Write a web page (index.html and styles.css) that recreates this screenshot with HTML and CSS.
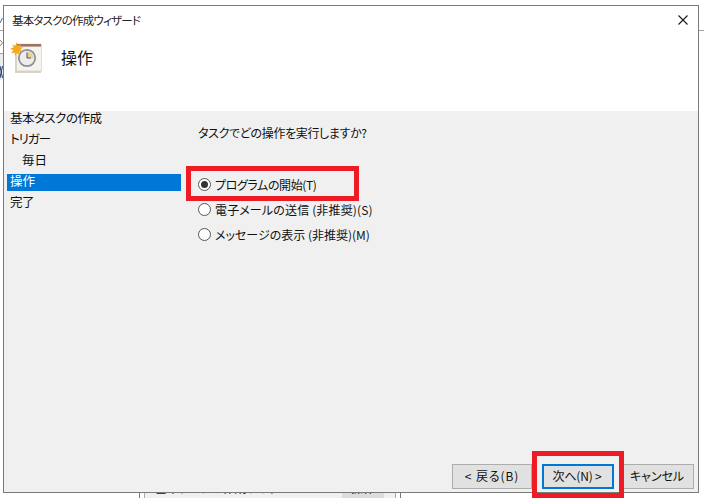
FILE: index.html
```html
<!DOCTYPE html>
<html lang="ja">
<head>
<meta charset="utf-8">
<title>基本タスクの作成ウィザード</title>
<link rel="stylesheet" href="styles.css">
</head>
<body>
<div class="behind-right"></div>
<svg class="behind-left" width="3" height="90" viewBox="0 0 3 90">
  <path d="M0 23L2.5 18" stroke="#3a6ea5" fill="none"/>
  <rect x="0" y="30" width="3" height="1" fill="#a0a0a0"/>
  <path d="M0 40L2.5 43L0 46" stroke="#888" fill="none"/>
  <rect x="0" y="53" width="3" height="1" fill="#a0a0a0"/>
  <rect x="0" y="54" width="3" height="26" fill="#ececec"/>
  <path d="M0 66L2.5 78M2.5 66L0 78" stroke="#1c3f78" fill="none"/>
</svg>
<div class="behind-bottom">
  <div class="bb-inner"><span class="bb-text">基本タスクの作成ウィザード</span><span class="bb-btn">操作</span></div>
</div>
<div class="window">
  <div class="titlebar">
    <span class="title">基本タスクの作成ウィザード</span>
    <svg class="close" width="12" height="12" viewBox="0 0 12 12"><path d="M1.5 1.5L10.5 10.5M10.5 1.5L1.5 10.5" stroke="#1a1a1a" stroke-width="1.1" fill="none"/></svg>
  </div>
  <div class="header">
    <svg class="hicon" width="34" height="34" viewBox="0 0 34 34">
      <rect x="5" y="3" width="26" height="28" fill="#d8d4ca"/>
      <rect x="6.5" y="2" width="25" height="27" fill="#f6f3ec" stroke="#cfcabd" stroke-width="0.6"/>
      <rect x="6" y="2" width="25" height="2.6" fill="#9c7560"/>
      <circle cx="17" cy="16" r="8.2" fill="#ececec" stroke="#8a8f98" stroke-width="1.8"/>
      <path d="M17 9.6A6.4 6.4 0 0 1 23.4 16H17Z" fill="#f0cf95"/>
      <path d="M17 10.5V16H21" stroke="#555" stroke-width="1" fill="none"/>
      <path d="M6.5 0L7.7 4L11 1.8L9.8 5.3L13.5 5.5L10.3 7.5L13 10L9.3 9.8L9.7 13.5L7 11L5 14L4.6 10.4L1 11.4L3.2 8.3L0 6.5L3.7 5.6L2.2 2.2L5.4 4Z" fill="#f7a81b"/>
    </svg>
    <span class="htitle">操作</span>
  </div>
  <div class="body">
    <nav class="steps">
      <div class="step">基本タスクの作成</div>
      <div class="step tight">トリガー</div>
      <div class="step sub">毎日</div>
      <div class="step active">操作</div>
      <div class="step">完了</div>
    </nav>
    <main class="content">
      <p class="question">タスクでどの操作を実行しますか?</p>
      <div class="options">
        <div class="option first"><span class="radio on"></span>プログラムの開始(T)</div>
        <div class="option second"><span class="radio"></span>電子メールの送信 (非推奨)(S)</div>
        <div class="option"><span class="radio"></span>メッセージの表示 (非推奨)(M)</div>
      </div>
    </main>
  </div>
  <div class="footer">
    <button class="btn back">&lt; 戻る(B)</button>
    <button class="btn primary">次へ(N) &gt;</button>
    <button class="btn cancel">キャンセル</button>
  </div>
  <div class="mark mark-radio"></div>
  <div class="mark mark-next"></div>
</div>
</body>
</html>
```
FILE: styles.css
```css
* { box-sizing: border-box; }
html, body { margin: 0; padding: 0; }
body {
  width: 704px; height: 498px; overflow: hidden; position: relative; background: #fff;
  font-family: "Noto Sans CJK JP", "Noto Sans", sans-serif; font-size: 12px; color: #111;
  font-feature-settings: "palt";
}
.behind-right { position: absolute; left: 698px; top: 30px; width: 6px; height: 1px; background: #a0a0a0; }
.behind-left { position: absolute; left: 0; top: 0; display: block; }
.behind-bottom {
  position: absolute; left: 139px; top: 484px; width: 262px; height: 14px;
  border-left: 1px solid #777; border-right: 1px solid #777; padding: 0 4px; background: #fff;
}
.bb-inner {
  height: 100%; display: flex; border-left: 1px solid #aaa; border-right: 1px solid #aaa;
  padding-left: 10px; background: #f0f0f0; overflow: hidden;
}
.bb-text { width: 187px; font-size: 12px; line-height: 8px; }
.bb-btn { width: 42px; background: #ddd; font-size: 12px; line-height: 8px; text-align: center; }
.window {
  position: absolute; left: 3px; top: 5px; width: 696px; height: 488px;
  border: 1px solid #7a7a7a; background: #fff;
  display: flex; flex-direction: column;
}
.titlebar { height: 28px; display: flex; align-items: center; justify-content: space-between; padding: 0 9px 0 8px; flex: none; }
.title { font-size: 11.5px; letter-spacing: -0.8px; color: #222; }
.header { height: 77px; flex: none; display: flex; align-items: flex-start; padding: 8px 0 0 6px; }
.hicon { flex: none; }
.htitle { font-size: 16px; margin-left: 17px; margin-top: 3px; line-height: 24px; color: #111; }
.body { flex: 1; background: #f0f0f0; display: flex; min-height: 0; }
.steps { width: 174px; margin-left: 3px; flex: none; }
.step { height: 21px; line-height: 14px; font-size: 12.5px; letter-spacing: -0.5px; padding-left: 3px; color: #111; }
.step.tight { letter-spacing: -1px; }
.step.sub { padding-left: 15px; letter-spacing: 0; }
.step.active { height: 17px; line-height: 14px; margin-bottom: 4px; letter-spacing: 0; background: #0078d7; color: #fff; }
.content { flex: 1; padding-left: 17px; }
.question { margin: 13px 0 0; font-size: 12px; letter-spacing: -0.35px; line-height: 17px; color: #111; }
.options { margin-top: 35px; display: flex; flex-direction: column; gap: 8px; }
.option { display: flex; align-items: center; height: 17px; font-size: 12px; color: #111; }
.option.first { letter-spacing: -0.4px; }
.option.second { letter-spacing: 0.15px; }
.radio { width: 13px; height: 13px; border: 1px solid #555; border-radius: 50%; background: #fff; margin-right: 4px; flex: none; position: relative; left: -0.5px; }
.radio.on::after { content: ""; position: absolute; left: 2px; top: 2px; width: 7px; height: 7px; border-radius: 50%; background: #333; }
.footer { background: #f0f0f0; height: 34px; flex: none; display: flex; justify-content: flex-end; padding: 6px 4px 0 0; }
.btn {
  height: 25px; background: #e1e1e1; border: 1px solid #adadad; padding: 0 0 2px;
  font-family: inherit; font-feature-settings: inherit; font-size: 12px; color: #111;
}
.back { width: 80px; margin-right: 10px; letter-spacing: 0.9px; }
.primary { width: 72px; margin-right: 6px; border: 2px solid #0078d7; letter-spacing: -0.2px; padding-right: 2px; }
.cancel { width: 74px; }
.mark { position: absolute; border: 5px solid #ed1c24; }
.mark-radio { left: 182px; top: 160px; width: 173px; height: 35px; }
.mark-next { left: 528px; top: 445px; width: 92px; height: 47px; }
```
